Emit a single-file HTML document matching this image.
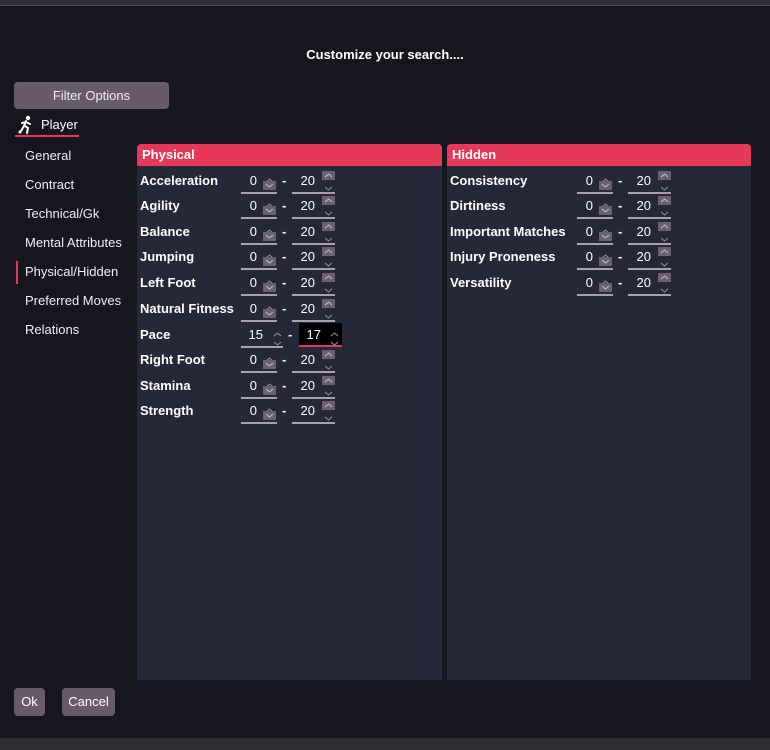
<!DOCTYPE html>
<html><head><meta charset="utf-8"><style>
*{margin:0;padding:0;box-sizing:border-box}
body{width:770px;height:750px;background:#16161e;position:relative;overflow:hidden;font-family:"Liberation Sans",sans-serif;color:#fff}
.a{position:absolute}
.top{left:0;top:0;width:770px;height:6px;background:#2e2f34;border-bottom:1px solid #4a4b50}
.bot{left:0;top:738px;width:770px;height:12px;background:#2e2f34}
.title{left:0;width:770px;top:47px;text-align:center;font-weight:bold;font-size:13px}
.fo{left:14px;top:82px;width:155px;height:27px;background:#665a6b;border-radius:4px;text-align:center;line-height:27px;font-size:13px;color:#eee}
.nav{left:25px;font-size:13px;color:#eef}
.panel{background:#262739;top:144px;height:536px;border-radius:4px 4px 0 0}
.ph{height:22px;background:#e6395a;border-radius:4px 4px 0 0;font-weight:bold;font-size:13px;line-height:22px;padding-left:5px}
.lbl{font-weight:bold;font-size:13px;line-height:16px}
.num{font-size:13px;line-height:16px;text-align:right}
.ul{height:2px;background:#a9a0ae}
.bx{width:13px;height:9px;background:#6b5f72}
.ch{width:13px;height:9px}
.btn{top:688px;height:28px;background:#665a6b;border-radius:4px;font-size:13px;line-height:28px;text-align:center}
</style></head><body>
<div class="a top"></div>
<div class="a title">Customize your search....</div>
<div class="a fo">Filter Options</div>
<svg class="a" style="left:17px;top:115px" width="18" height="19" viewBox="0 0 18 19"><circle cx="11" cy="3" r="2.2" fill="#fff"/><path d="M9 6 L7 11 L4 16 M8 11 L11 13 L10 18 M9 7 L13 9 M9 7 L5 8" stroke="#fff" stroke-width="2" fill="none" stroke-linecap="round"/><circle cx="3" cy="17" r="1.5" fill="#fff"/></svg>
<div class="a" style="left:41px;top:117px;font-size:13px">Player</div>
<div class="a" style="left:15px;top:135px;width:64px;height:2px;background:#e6395a"></div>
<div class="a nav" style="top:148px">General</div>
<div class="a nav" style="top:177px">Contract</div>
<div class="a nav" style="top:206px">Technical/Gk</div>
<div class="a nav" style="top:235px">Mental Attributes</div>
<div class="a" style="left:16px;top:261px;width:2px;height:23px;background:#e6395a"></div>
<div class="a nav" style="top:264px">Physical/Hidden</div>
<div class="a nav" style="top:293px">Preferred Moves</div>
<div class="a nav" style="top:322px">Relations</div>

<div class="a panel" style="left:137px;width:305px"><div class="ph">Physical</div></div>
<div class="a panel" style="left:447px;width:304px"><div class="ph">Hidden</div></div>

<div id="rows"></div>

<div class="a btn" style="left:14px;width:31px">Ok</div>
<div class="a btn" style="left:62px;width:53px">Cancel</div>
<div class="a bot"></div>

<script>
var up='<svg width="13" height="9" viewBox="0 0 13 9"><path d="M3 6 L6.5 3 L10 6" stroke="#9a93a0" stroke-width="1" fill="none"/></svg>';
var dn='<svg width="13" height="9" viewBox="0 0 13 9"><path d="M3 3 L6.5 6 L10 3" stroke="#9a93a0" stroke-width="1" fill="none"/></svg>';
var upw='<svg width="13" height="9" viewBox="0 0 13 9" style="display:block"><path d="M3 6 L6.5 3 L10 6" stroke="#c8c0cc" stroke-width="1" fill="none"/></svg>';
var dnw='<svg width="13" height="9" viewBox="0 0 13 9" style="display:block"><path d="M3 3 L6.5 6 L10 3" stroke="#c8c0cc" stroke-width="1" fill="none"/></svg>';
var h='';
function row(lx,minx,maxx,cy,label,a,b,pace){
 h+='<div class="a lbl" style="left:'+lx+'px;top:'+(cy-8)+'px">'+label+'</div>';
 if(!pace){
 h+='<div class="a num" style="left:'+minx+'px;width:16px;top:'+(cy-8)+'px">'+a+'</div>';
 h+='<div class="a ch" style="left:'+(minx+22)+'px;top:'+(cy-9)+'px">'+up+'</div>';
 h+='<div class="a bx" style="left:'+(minx+22)+'px;top:'+(cy)+'px">'+dnw+'</div>';
 h+='<div class="a ul" style="left:'+minx+'px;width:36px;top:'+(cy+11)+'px"></div>';
 h+='<div class="a lbl" style="left:'+(minx+41)+'px;top:'+(cy-8)+'px">-</div>';
 h+='<div class="a num" style="left:'+(maxx)+'px;width:23px;top:'+(cy-8)+'px">'+b+'</div>';
 h+='<div class="a bx" style="left:'+(maxx+30)+'px;top:'+(cy-10)+'px">'+upw+'</div>';
 h+='<div class="a ch" style="left:'+(maxx+30)+'px;top:'+(cy-1)+'px">'+dn+'</div>';
 h+='<div class="a ul" style="left:'+maxx+'px;width:43px;top:'+(cy+11)+'px"></div>';
 } else {
 h+='<div class="a num" style="left:'+minx+'px;width:22px;top:'+(cy-8)+'px">'+a+'</div>';
 h+='<div class="a ch" style="left:'+(minx+30)+'px;top:'+(cy-9)+'px">'+up+'</div>';
 h+='<div class="a ch" style="left:'+(minx+30)+'px;top:'+(cy)+'px">'+dn+'</div>';
 h+='<div class="a ul" style="left:'+minx+'px;width:42px;top:'+(cy+11)+'px"></div>';
 h+='<div class="a lbl" style="left:'+(minx+47)+'px;top:'+(cy-8)+'px">-</div>';
 h+='<div class="a" style="left:299px;top:'+(cy-12)+'px;width:43px;height:24px;background:#000;border-bottom:2px solid #e6395a"></div>';
 h+='<div class="a num" style="left:299px;width:22px;top:'+(cy-8)+'px">'+b+'</div>';
 h+='<div class="a ch" style="left:328px;top:'+(cy-9)+'px">'+up+'</div>';
 h+='<div class="a ch" style="left:328px;top:'+(cy)+'px">'+dn+'</div>';
 }
}
var P=['Acceleration','Agility','Balance','Jumping','Left Foot','Natural Fitness','Pace','Right Foot','Stamina','Strength'];
var ys=[181,206,232,257,283,309,335,360,386,411];
for(var i=0;i<P.length;i++){ if(P[i]=='Pace') row(140,241,0,ys[i],'Pace','15','17',true); else row(140,241,292,ys[i],P[i],'0','20');}
var Hd=['Consistency','Dirtiness','Important Matches','Injury Proneness','Versatility'];
for(var i=0;i<Hd.length;i++) row(450,577,628,ys[i],Hd[i],'0','20');
document.getElementById('rows').innerHTML=h;
</script>
</body></html>
